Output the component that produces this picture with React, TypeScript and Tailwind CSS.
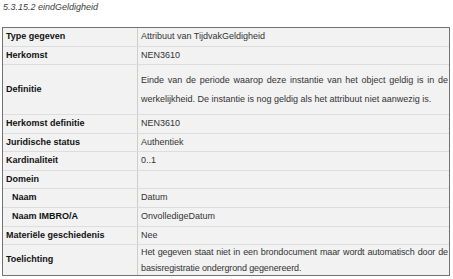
const rows: { label: string; value: string; h: string; indent?: boolean; long?: boolean }[] = [
  { label: "Type gegeven", value: "Attribuut van TijdvakGeldigheid", h: "h-[18px]" },
  { label: "Herkomst", value: "NEN3610", h: "h-[18px]" },
  {
    label: "Definitie",
    value:
      "Einde van de periode waarop deze instantie van het object geldig is in de werkelijkheid. De instantie is nog geldig als het attribuut niet aanwezig is.",
    h: "h-[50px]",
    long: true,
  },
  { label: "Herkomst definitie", value: "NEN3610", h: "h-[19px]" },
  { label: "Juridische status", value: "Authentiek", h: "h-[18px]" },
  { label: "Kardinaliteit", value: "0..1", h: "h-[19px]" },
  { label: "Domein", value: "", h: "h-[18px]" },
  { label: "Naam", value: "Datum", h: "h-[19px]", indent: true },
  { label: "Naam IMBRO/A", value: "OnvolledigeDatum", h: "h-[19px]", indent: true },
  { label: "Materiële geschiedenis", value: "Nee", h: "h-[18px]" },
  {
    label: "Toelichting",
    value:
      "Het gegeven staat niet in een brondocument maar wordt automatisch door de basisregistratie ondergrond gegenereerd.",
    h: "h-[31px]",
    long: true,
  },
];

export default function App() {
  return (
    <div className="w-[453px] h-[279px] bg-white font-['Liberation_Sans',Arial,sans-serif] text-[9px]">
      <div className="h-[27px] pl-[3px] pt-[1px] leading-[12px] italic text-[#3c3c3c]">
        5.3.15.2 eindGeldigheid
      </div>
      <div className="ml-[2px] w-[448px] border border-[#727272] bg-[#f2f2f2]">
        {rows.map((r, i) => (
          <div
            key={r.label}
            className={`flex ${r.h} ${i > 0 ? "border-t border-[#dddddd]" : ""}`}
          >
            <div
              className={`w-[135px] shrink-0 flex items-center border-r border-[#cdcdcd] font-bold text-[#111111] ${
                r.indent ? "pl-[9px]" : "pl-[3px]"
              }`}
            >
              {r.label}
            </div>
            <div
              className={`flex-1 flex items-center pl-[3px] pr-[1px] text-[#333333] ${
                r.long ? "text-justify" : ""
              }`}
            >
              <span
                className={
                  r.label === "Definitie"
                    ? "leading-[19px]"
                    : r.long
                    ? "leading-[16px] tracking-[-0.12px]"
                    : ""
                }
              >
                {r.value}
              </span>
            </div>
          </div>
        ))}
      </div>
    </div>
  );
}
